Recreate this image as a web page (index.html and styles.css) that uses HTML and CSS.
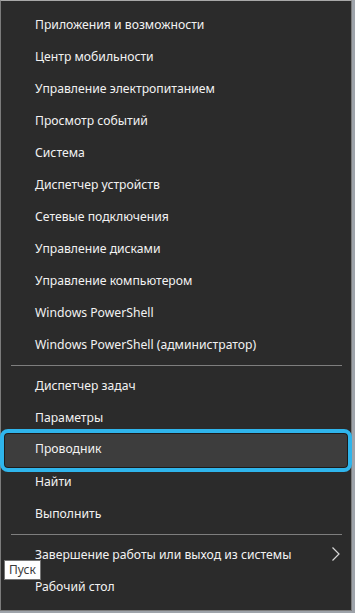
FILE: index.html
```html
<!DOCTYPE html>
<html lang="ru">
<head>
<meta charset="utf-8">
<link rel="stylesheet" href="styles.css">
</head>
<body>
<div class="menu">
  <div class="row">Приложения и возможности</div>
  <div class="row">Центр мобильности</div>
  <div class="row">Управление электропитанием</div>
  <div class="row">Просмотр событий</div>
  <div class="row">Система</div>
  <div class="row">Диспетчер устройств</div>
  <div class="row">Сетевые подключения</div>
  <div class="row">Управление дисками</div>
  <div class="row">Управление компьютером</div>
  <div class="row">Windows PowerShell</div>
  <div class="row">Windows PowerShell (администратор)</div>
  <div class="sep"></div>
  <div class="row">Диспетчер задач</div>
  <div class="row">Параметры</div>
  <div class="row active"><span class="label">Проводник</span></div>
  <div class="row">Найти</div>
  <div class="row">Выполнить</div>
  <div class="sep"></div>
  <div class="row sub">Завершение работы или выход из системы
    <svg class="chev" width="10" height="16" viewBox="0 0 10 16"><polyline points="1.5,1.5 8,8 1.5,14.5" fill="none" stroke="#d8d8d8" stroke-width="1.2"/></svg>
  </div>
  <div class="row">Рабочий стол</div>
  <div class="tip">Пуск</div>
</div>
</body>
</html>
```
FILE: styles.css
```css
html, body {
  margin: 0;
  padding: 0;
}
body {
  background: #9ea3aa;
  width: 355px;
  height: 613px;
  overflow: hidden;
  font-family: "Noto Sans", "Open Sans", sans-serif;
}
.menu {
  position: relative;
  box-sizing: border-box;
  width: 352px;
  height: 611px;
  background: #2b2b2b;
  border: 1px solid #7c7c7c;
  border-top-color: #a8a8a8;
  padding: 7px 0 8px;
  display: flex;
  flex-direction: column;
}
.row {
  height: 32px;
  flex: none;
  display: flex;
  align-items: center;
  padding-left: 34px;
  color: #f2f2f2;
  font-size: 12.2px;
  position: relative;
}
.sep {
  flex: none;
  height: 1px;
  background: #7e7e7e;
  margin: 5px 9px 3px 10px;
}
.sub {
  justify-content: space-between;
  padding-right: 10px;
}
.chev {
  display: block;
}
.active::before {
  content: "";
  position: absolute;
  left: -1px;
  right: -1px;
  top: -4px;
  bottom: -7px;
  border: 4px solid #2fb5ec;
  border-radius: 8px;
  background: #3d3d3d;
  box-shadow: inset 0 0 0 1px #1c1c1c;
}
.label {
  position: relative;
  top: -1px;
}
.tip {
  position: absolute;
  left: 3px;
  top: 559px;
  background: #ffffff;
  border: 1px solid #767676;
  color: #3a3a3a;
  font-size: 12px;
  line-height: 18px;
  padding: 0 4px;
}
```
